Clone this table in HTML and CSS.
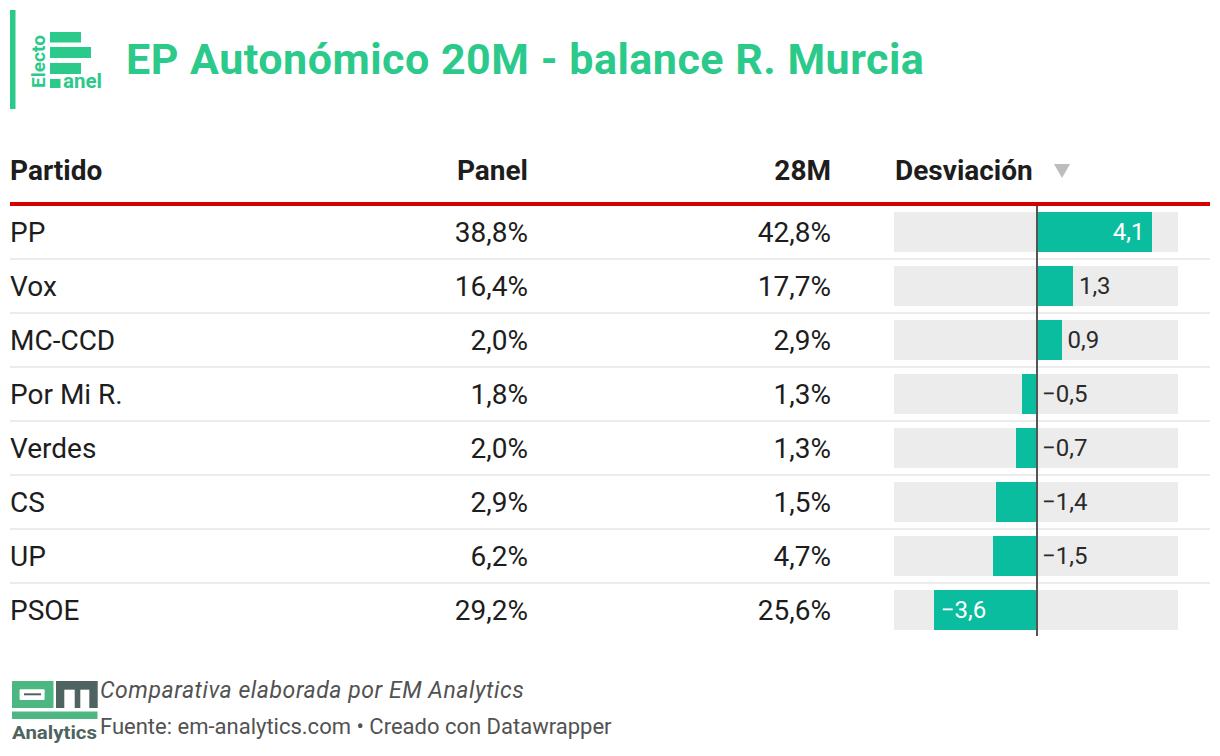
FILE: index.html
```html
<!DOCTYPE html>
<html lang="es">
<head>
<meta charset="utf-8">
<title>EP Autonómico 20M - balance R. Murcia</title>
<link rel="stylesheet" href="styles.css">
</head>
<body>
<div class="chart">
  <header class="head">
    <svg class="logo" viewBox="0 0 100 100" width="100" height="100" aria-label="ElectoPanel">
      <rect x="0" y="0" width="5.5" height="99" fill="#2bc98a"/>
      <text class="logo-txt" transform="translate(35,78) rotate(-90)" font-size="19" textLength="53" lengthAdjust="spacingAndGlyphs">Electo</text>
      <rect x="40" y="22" width="31" height="10.5" fill="#2bc98a"/>
      <rect x="40" y="37" width="41" height="11" fill="#2bc98a"/>
      <rect x="40" y="53" width="31" height="11" fill="#2bc98a"/>
      <rect x="40" y="69" width="10.5" height="9" fill="#2bc98a"/>
      <text class="logo-txt" x="53" y="78" font-size="20" textLength="39" lengthAdjust="spacingAndGlyphs">anel</text>
    </svg>
    <h1 class="title">EP Autonómico 20M - balance R. Murcia</h1>
  </header>

  <div class="table">
    <div class="row thead">
      <div class="cell">Partido</div>
      <div class="cell num">Panel</div>
      <div class="cell num">28M</div>
      <div class="cell dev-head">Desviación
        <svg class="sort" width="16" height="14" viewBox="0 0 16 14"><polygon points="0,0 16,0 8,14" fill="#bdbdbd"/></svg>
      </div>
    </div>

    <div class="tbody">
      <div class="row">
        <div class="cell">PP</div>
        <div class="cell num">38,8%</div>
        <div class="cell num">42,8%</div>
        <div class="cell dev"><div class="track">
          <div class="half neg"></div>
          <div class="half pos"><div class="bar inside-r" style="width:116.4px"><span class="lbl in">4,1</span></div></div>
        </div></div>
      </div>
      <div class="row">
        <div class="cell">Vox</div>
        <div class="cell num">16,4%</div>
        <div class="cell num">17,7%</div>
        <div class="cell dev"><div class="track">
          <div class="half neg"></div>
          <div class="half pos"><div class="bar" style="width:36.9px"></div><span class="lbl out">1,3</span></div>
        </div></div>
      </div>
      <div class="row">
        <div class="cell">MC-CCD</div>
        <div class="cell num">2,0%</div>
        <div class="cell num">2,9%</div>
        <div class="cell dev"><div class="track">
          <div class="half neg"></div>
          <div class="half pos"><div class="bar" style="width:25.6px"></div><span class="lbl out">0,9</span></div>
        </div></div>
      </div>
      <div class="row">
        <div class="cell">Por Mi R.</div>
        <div class="cell num">1,8%</div>
        <div class="cell num">1,3%</div>
        <div class="cell dev"><div class="track">
          <div class="half neg"><div class="bar" style="width:14.2px"></div></div>
          <div class="half pos"><span class="lbl out">−0,5</span></div>
        </div></div>
      </div>
      <div class="row">
        <div class="cell">Verdes</div>
        <div class="cell num">2,0%</div>
        <div class="cell num">1,3%</div>
        <div class="cell dev"><div class="track">
          <div class="half neg"><div class="bar" style="width:19.9px"></div></div>
          <div class="half pos"><span class="lbl out">−0,7</span></div>
        </div></div>
      </div>
      <div class="row">
        <div class="cell">CS</div>
        <div class="cell num">2,9%</div>
        <div class="cell num">1,5%</div>
        <div class="cell dev"><div class="track">
          <div class="half neg"><div class="bar" style="width:39.8px"></div></div>
          <div class="half pos"><span class="lbl out">−1,4</span></div>
        </div></div>
      </div>
      <div class="row">
        <div class="cell">UP</div>
        <div class="cell num">6,2%</div>
        <div class="cell num">4,7%</div>
        <div class="cell dev"><div class="track">
          <div class="half neg"><div class="bar" style="width:42.6px"></div></div>
          <div class="half pos"><span class="lbl out">−1,5</span></div>
        </div></div>
      </div>
      <div class="row last">
        <div class="cell">PSOE</div>
        <div class="cell num">29,2%</div>
        <div class="cell num">25,6%</div>
        <div class="cell dev"><div class="track">
          <div class="half neg"><div class="bar inside-l" style="width:102.2px"><span class="lbl in">−3,6</span></div></div>
          <div class="half pos"></div>
        </div></div>
      </div>
      <div class="zero"></div>
    </div>
  </div>

  <footer class="foot">
    <svg class="em-logo" viewBox="0 0 86 64" width="86" height="64" aria-label="EM Analytics">
      <rect x="0" y="0" width="41.5" height="27" fill="#4db784"/>
      <rect x="7.6" y="8.3" width="25" height="10.7" rx="1" fill="#ffffff"/>
      <rect x="12" y="12.3" width="17" height="2" fill="#4f6461"/>
      <rect x="44" y="0" width="41.7" height="27" fill="#4f6461"/>
      <rect x="52.3" y="8.7" width="10.4" height="18.3" fill="#ffffff"/>
      <rect x="68.3" y="8.7" width="9" height="18.3" fill="#ffffff"/>
      <rect x="0" y="30.5" width="85.5" height="7.5" fill="#4db784"/>
      <text class="em-txt" x="0" y="57.7" font-size="19" textLength="85" lengthAdjust="spacingAndGlyphs">Analytics</text>
    </svg>
    <div class="notes">
      <p class="note italic">Comparativa elaborada por EM Analytics</p>
      <p class="note">Fuente: em-analytics.com • Creado con Datawrapper</p>
    </div>
  </footer>
</div>
</body>
</html>
```

FILE: styles.css
```css
* { box-sizing: border-box; }

html, body {
  margin: 0;
  padding: 0;
  background: #ffffff;
}

body {
  font-family: Roboto, "Liberation Sans", Arial, sans-serif;
  color: #1d1d1d;
}

.chart {
  width: 1220px;
  padding: 10px 10px 0 10px;
}

/* ---------- header ---------- */
.head {
  display: flex;
  align-items: center;
  height: 100px;
}

.logo {
  flex: none;
  display: block;
}

.logo-txt {
  font-family: Roboto, "Liberation Sans", sans-serif;
  font-weight: 700;
  fill: #2bc98a;
}

.title {
  margin: 0 0 0 16px;
  font-size: 43px;
  font-weight: 700;
  letter-spacing: 0.5px;
  line-height: 1;
  color: #2bc98a;
  position: relative;
  top: -1px;
}

/* ---------- table ---------- */
.row {
  display: grid;
  grid-template-columns: 360px 158px 303px 1fr;
  align-items: center;
  height: 54px;
  border-bottom: 2px solid #ececec;
}

.row.last {
  height: 52px;
  border-bottom: none;
}

.thead {
  height: 96px;
  align-items: end;
  padding-bottom: 15px;
  border-bottom: 4px solid #d40000;
  font-weight: 700;
}

.cell {
  font-size: 28px;
  line-height: 32px;
  white-space: nowrap;
}

.tbody .cell {
  padding-top: 1px;
}

.tbody .cell.dev {
  padding-top: 0;
}

.num {
  text-align: right;
}

.dev-head {
  padding-left: 64px;
  display: flex;
  align-items: center;
}

.sort {
  margin-left: 21px;
  display: block;
}

.tbody {
  position: relative;
}

.dev {
  padding: 0 32px 0 63px;
}

.track {
  display: flex;
  width: 284px;
  height: 40px;
  background: #ececec;
}

.half {
  width: 142px;
  height: 40px;
  display: flex;
  align-items: center;
}

.neg {
  justify-content: flex-end;
}

.bar {
  height: 40px;
  background: #0bbd9f;
  display: flex;
  align-items: center;
  flex: none;
}

.inside-r {
  justify-content: flex-end;
  padding-right: 8px;
}

.inside-l {
  justify-content: flex-start;
  padding-left: 7px;
}

.lbl {
  font-size: 24px;
  line-height: 40px;
  white-space: nowrap;
}

.lbl.in {
  color: #ffffff;
}

.lbl.out {
  color: #2a2a2a;
  margin-left: 6px;
}

.zero {
  position: absolute;
  left: 1026px;
  top: 0;
  bottom: 0;
  width: 2px;
  background: #555555;
}

/* ---------- footer ---------- */
.foot {
  display: flex;
  align-items: flex-start;
  margin-top: 37px;
}

.em-logo {
  flex: none;
  display: block;
  margin: 8px 0 0 2px;
}

.em-txt {
  font-family: Roboto, "Liberation Sans", sans-serif;
  font-weight: 700;
  fill: #4f6461;
}

.notes {
  margin-left: 2px;
}

.note {
  margin: 0;
  font-size: 22px;
  line-height: 36px;
  color: #525252;
  white-space: nowrap;
}

.note.italic {
  font-size: 23px;
  letter-spacing: 0.55px;
  font-style: italic;
}
```
